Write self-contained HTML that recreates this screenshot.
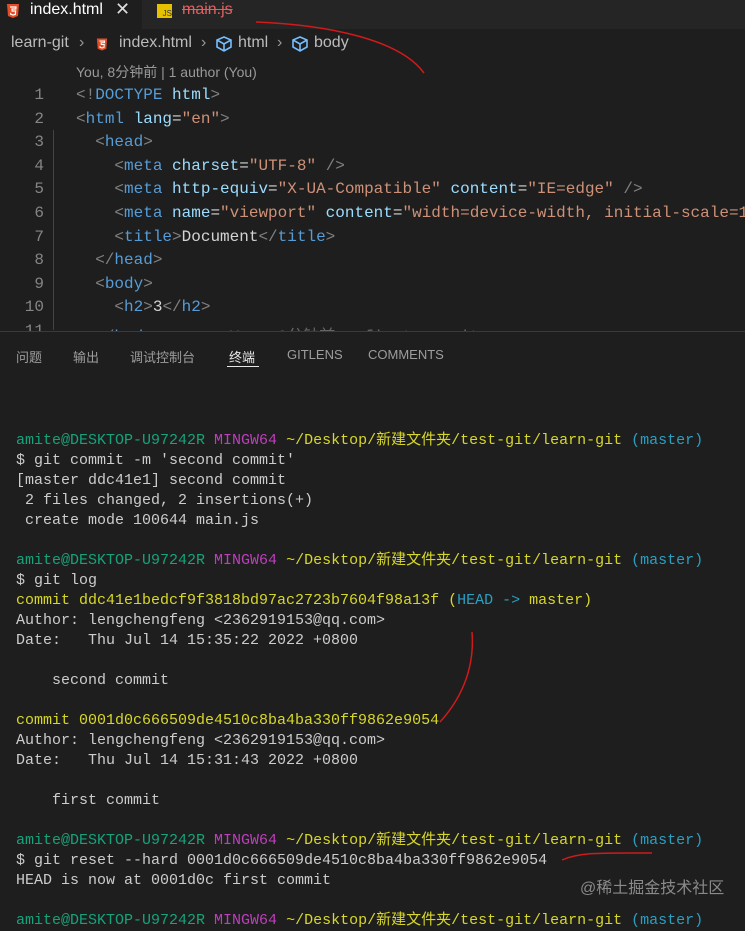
<!DOCTYPE html>
<html><head><meta charset="utf-8"><style>
body{margin:0;width:745px;height:919px;background:#1e1e1e;overflow:hidden;position:relative;font-family:"Liberation Sans","Noto Sans CJK SC",sans-serif}
.a{position:absolute;white-space:pre}
.m{font-family:"Liberation Mono","Noto Sans CJK SC",monospace}
.ed{font-size:16px;color:#d4d4d4}
.ln{color:#858585;font-size:16px;width:44px;text-align:right}
.t{color:#808080}.tg{color:#569cd6}.at{color:#9cdcfe}.s{color:#ce9178}
.tm{font-size:15px;color:#cccccc}
.g{color:#16a37a}.p{color:#bc3fbc}.y{color:#d7d72a}.c{color:#2a9fc0}
.bc{font-size:16px;color:#bbb;top:34px}
</style></head><body>
<div class="a" style="left:0;top:0;width:745px;height:29px;background:#252526"></div>
<div class="a" style="left:0;top:0;width:142px;height:29px;background:#1e1e1e"></div>
<svg class="a" style="left:6px;top:3px" width="14" height="16" viewBox="0 0 14 16"><path d="M1 1h12l-1 12-5 2-5-2z" fill="#e44d26"/><path d="M4 4h6l-.2 2H6l.1 2h3.5l-.3 3.5L7 12l-2.3-.7-.1-1.5" fill="none" stroke="#fff" stroke-width="1.2"/></svg>
<div class="a" style="left:30px;top:1px;font-size:16px;color:#fff">index.html</div>
<div class="a" style="left:115px;top:-1px;font-size:18px;color:#ddd">✕</div>
<div class="a" style="left:157px;top:4px;width:15px;height:14px;background:#e5c100;font-size:8px;color:#333;text-align:right;line-height:20px">JS</div>
<div class="a" style="left:182px;top:1px;font-size:16px;color:#e06060;text-decoration:line-through">main.js</div>
<div class="a bc" style="left:11px">learn-git</div>
<div class="a bc" style="left:79px;color:#999">›</div>
<svg class="a" style="left:96px;top:37px" width="12" height="15" viewBox="0 0 14 16"><path d="M1 1h12l-1 12-5 2-5-2z" fill="#e44d26"/><path d="M4 4h6l-.2 2H6l.1 2h3.5l-.3 3.5L7 12l-2.3-.7-.1-1.5" fill="none" stroke="#fff" stroke-width="1.2"/></svg>
<div class="a bc" style="left:119px">index.html</div>
<div class="a bc" style="left:201px;color:#999">›</div>
<svg class="a" style="left:215px;top:36px" width="18" height="16" viewBox="0 0 18 16"><path d="M9 1l7 3v7l-7 4-7-4V4zM2 4l7 4 7-4M9 8v7" fill="none" stroke="#75beff" stroke-width="1.6"/></svg>
<div class="a bc" style="left:238px">html</div>
<div class="a bc" style="left:277px;color:#999">›</div>
<svg class="a" style="left:291px;top:36px" width="18" height="16" viewBox="0 0 18 16"><path d="M9 1l7 3v7l-7 4-7-4V4zM2 4l7 4 7-4M9 8v7" fill="none" stroke="#75beff" stroke-width="1.6"/></svg>
<div class="a bc" style="left:314px">body</div>
<div class="a" style="left:76px;top:62px;font-size:14px;color:#999">You, 8分钟前 | 1 author (You)</div>
<div class="a" style="left:53px;top:130px;width:1px;height:200px;background:#444"></div>
<div class="a" style="left:0;top:86px">
<div class="a ln m" style="top:0">1</div><div class="a ln m" style="top:23.6px">2</div><div class="a ln m" style="top:47.2px">3</div><div class="a ln m" style="top:70.8px">4</div><div class="a ln m" style="top:94.4px">5</div><div class="a ln m" style="top:118px">6</div><div class="a ln m" style="top:141.6px">7</div><div class="a ln m" style="top:165.2px">8</div><div class="a ln m" style="top:188.8px">9</div><div class="a ln m" style="top:212.4px">10</div><div class="a ln m" style="top:236px">11</div>
<div class="a m ed" style="left:76px;top:0"><span class="t">&lt;!</span><span class="tg">DOCTYPE</span> <span class="at">html</span><span class="t">&gt;</span></div>
<div class="a m ed" style="left:76px;top:23.6px"><span class="t">&lt;</span><span class="tg">html</span> <span class="at">lang</span>=<span class="s">"en"</span><span class="t">&gt;</span></div>
<div class="a m ed" style="left:76px;top:47.2px">  <span class="t">&lt;</span><span class="tg">head</span><span class="t">&gt;</span></div>
<div class="a m ed" style="left:76px;top:70.8px">    <span class="t">&lt;</span><span class="tg">meta</span> <span class="at">charset</span>=<span class="s">"UTF-8"</span> <span class="t">/&gt;</span></div>
<div class="a m ed" style="left:76px;top:94.4px">    <span class="t">&lt;</span><span class="tg">meta</span> <span class="at">http-equiv</span>=<span class="s">"X-UA-Compatible"</span> <span class="at">content</span>=<span class="s">"IE=edge"</span> <span class="t">/&gt;</span></div>
<div class="a m ed" style="left:76px;top:118px">    <span class="t">&lt;</span><span class="tg">meta</span> <span class="at">name</span>=<span class="s">"viewport"</span> <span class="at">content</span>=<span class="s">"width=device-width, initial-scale=1.0"</span></div>
<div class="a m ed" style="left:76px;top:141.6px">    <span class="t">&lt;</span><span class="tg">title</span><span class="t">&gt;</span>Document<span class="t">&lt;/</span><span class="tg">title</span><span class="t">&gt;</span></div>
<div class="a m ed" style="left:76px;top:165.2px">  <span class="t">&lt;/</span><span class="tg">head</span><span class="t">&gt;</span></div>
<div class="a m ed" style="left:76px;top:188.8px">  <span class="t">&lt;</span><span class="tg">body</span><span class="t">&gt;</span></div>
<div class="a m ed" style="left:76px;top:212.4px">    <span class="t">&lt;</span><span class="tg">h2</span><span class="t">&gt;</span>3<span class="t">&lt;/</span><span class="tg">h2</span><span class="t">&gt;</span></div>
<div class="a m ed" style="left:76px;top:236px">  <span class="t">&lt;/</span><span class="tg">body</span><span class="t">&gt;</span>       <span style="color:#666">You, 8分钟前 • first commit</span></div>
</div>
<div class="a" style="left:0;top:331px;width:745px;height:588px;background:#1e1e1e;border-top:1px solid #3a3a3a"></div>
<div class="a" style="left:16px;top:347px;font-size:13px;color:#9d9d9d">问题</div>
<div class="a" style="left:73px;top:347px;font-size:13px;color:#9d9d9d">输出</div>
<div class="a" style="left:130px;top:347px;font-size:13px;color:#9d9d9d">调试控制台</div>
<div class="a" style="left:229px;top:347px;font-size:13px;color:#e7e7e7">终端</div>
<div class="a" style="left:227px;top:366px;width:32px;height:1px;background:#e7e7e7"></div>
<div class="a" style="left:287px;top:347px;font-size:13px;color:#9d9d9d">GITLENS</div>
<div class="a" style="left:368px;top:347px;font-size:13px;color:#9d9d9d">COMMENTS</div>
<div class="a m tm" style="left:16px;top:431px;line-height:20px"><span class="g">amite@DESKTOP-U97242R</span> <span class="p">MINGW64</span> <span class="y">~/Desktop/新建文件夹/test-git/learn-git</span> <span class="c">(master)</span>
$ git commit -m 'second commit'
[master ddc41e1] second commit
 2 files changed, 2 insertions(+)
 create mode 100644 main.js

<span class="g">amite@DESKTOP-U97242R</span> <span class="p">MINGW64</span> <span class="y">~/Desktop/新建文件夹/test-git/learn-git</span> <span class="c">(master)</span>
$ git log
<span class="y">commit ddc41e1bedcf9f3818bd97ac2723b7604f98a13f (</span><span class="c">HEAD -&gt; </span><span class="y">master)</span>
Author: lengchengfeng &lt;2362919153@qq.com&gt;
Date:   Thu Jul 14 15:35:22 2022 +0800

    second commit

<span class="y">commit 0001d0c666509de4510c8ba4ba330ff9862e9054</span>
Author: lengchengfeng &lt;2362919153@qq.com&gt;
Date:   Thu Jul 14 15:31:43 2022 +0800

    first commit

<span class="g">amite@DESKTOP-U97242R</span> <span class="p">MINGW64</span> <span class="y">~/Desktop/新建文件夹/test-git/learn-git</span> <span class="c">(master)</span>
$ git reset --hard 0001d0c666509de4510c8ba4ba330ff9862e9054
HEAD is now at 0001d0c first commit

<span class="g">amite@DESKTOP-U97242R</span> <span class="p">MINGW64</span> <span class="y">~/Desktop/新建文件夹/test-git/learn-git</span> <span class="c">(master)</span></div>
<div class="a" style="left:580px;top:874px;font-size:16px;color:#8a8a8a">@稀土掘金技术社区</div>
<svg class="a" style="left:0;top:0" width="745" height="919"><g fill="none" stroke="#d11a1a" stroke-width="1.5"><path d="M256 22 C330 25 400 40 424 73"/><path d="M440 722 C460 700 475 670 472 632"/><path d="M562 860 C580 852 600 853 652 853"/></g></svg>
</body></html>
